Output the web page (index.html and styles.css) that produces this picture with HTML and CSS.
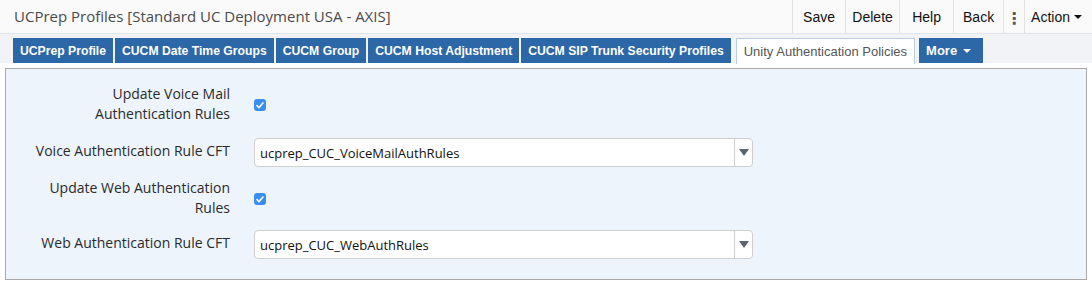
FILE: index.html
```html
<!DOCTYPE html>
<html>
<head>
<meta charset="utf-8">
<link rel="stylesheet" href="styles.css">
</head>
<body>
<header class="topbar">
  <div class="title">UCPrep Profiles [Standard UC Deployment USA - AXIS]</div>
  <div class="actions">
    <button class="act w53">Save</button>
    <button class="act w54">Delete</button>
    <button class="act w54">Help</button>
    <button class="act w50">Back</button>
    <span class="dots">&#8942;</span>
    <button class="act action">Action <span class="caret"></span></button>
  </div>
</header>
<nav class="tabs">
  <a class="tab">UCPrep Profile</a>
  <a class="tab">CUCM Date Time Groups</a>
  <a class="tab">CUCM Group</a>
  <a class="tab">CUCM Host Adjustment</a>
  <a class="tab">CUCM SIP Trunk Security Profiles</a>
  <a class="tab active">Unity Authentication Policies</a>
  <a class="tab more">More <span class="caret white"></span></a>
</nav>
<section class="panel">
  <div class="row">
    <label class="lbl">Update Voice Mail<br>Authentication Rules</label>
    <div class="ctl"><span class="check"><svg width="8" height="7" viewBox="0 0 8 7"><path d="M1 3.6 L3 5.6 L7 1" fill="none" stroke="#fff" stroke-width="1.6" stroke-linecap="round" stroke-linejoin="round"/></svg></span></div>
  </div>
  <div class="row">
    <label class="lbl single">Voice Authentication Rule CFT</label>
    <div class="ctl"><div class="select"><span class="val">ucprep_CUC_VoiceMailAuthRules</span><span class="arrow"><span class="tri"></span></span></div></div>
  </div>
  <div class="row">
    <label class="lbl">Update Web Authentication<br>Rules</label>
    <div class="ctl"><span class="check"><svg width="8" height="7" viewBox="0 0 8 7"><path d="M1 3.6 L3 5.6 L7 1" fill="none" stroke="#fff" stroke-width="1.6" stroke-linecap="round" stroke-linejoin="round"/></svg></span></div>
  </div>
  <div class="row">
    <label class="lbl single">Web Authentication Rule CFT</label>
    <div class="ctl"><div class="select"><span class="val">ucprep_CUC_WebAuthRules</span><span class="arrow"><span class="tri"></span></span></div></div>
  </div>
</section>
</body>
</html>
```
FILE: styles.css
```css
html, body {
  margin: 0;
  padding: 0;
  background: #ffffff;
}
body {
  width: 1092px;
  height: 287px;
  overflow: hidden;
}
.topbar {
  display: flex;
  justify-content: space-between;
  align-items: stretch;
  height: 34px;
  background: #fafafa;
  border-bottom: 1px solid #dfe4ea;
  box-sizing: border-box;
}
.title {
  font-family: "Open Sans", sans-serif;
  font-size: 15px;
  color: #4a4a4a;
  padding-left: 14px;
  display: flex;
  align-items: center;
  padding-bottom: 1px;
}
.actions {
  display: flex;
  align-items: stretch;
}
.act {
  font-family: "Liberation Sans", Arial, sans-serif;
  font-size: 14px;
  color: #111;
  background: transparent;
  border: none;
  border-left: 1px solid #e2e2e2;
  padding: 0;
  margin: 0;
  text-align: center;
  box-sizing: border-box;
  cursor: pointer;
}
.w53 { width: 53px; }
.w54 { width: 54px; }
.w50 { width: 50px; }
.dots {
  display: flex;
  align-items: center;
  justify-content: center;
  width: 21px;
  box-sizing: border-box;
  border-left: 1px solid #e2e2e2;
  font-family: "DejaVu Sans", sans-serif;
  font-size: 16px;
  font-weight: bold;
  color: #555;
  padding-top: 3px;
}
.action {
  padding: 0 10px 0 6px;
  display: flex;
  align-items: center;
  gap: 4px;
}
.caret {
  display: inline-block;
  width: 0;
  height: 0;
  border-left: 4px solid transparent;
  border-right: 4px solid transparent;
  border-top: 4px solid #111;
  margin-top: 1px;
}
.caret.white { border-top-color: #fff; margin-left: 6px; }
.tabs {
  display: flex;
  align-items: flex-end;
  gap: 2px;
  height: 29px;
  background: #f1f3f6;
  padding-left: 13px;
  box-sizing: border-box;
}
.tab {
  font-family: "Liberation Sans", Arial, sans-serif;
  font-size: 12.2px;
  font-weight: bold;
  color: #fff;
  background: #2c67a8;
  height: 25px;
  padding: 0 7px;
  display: flex;
  align-items: center;
  box-sizing: border-box;
  white-space: nowrap;
}
.tab.active {
  background: #fff;
  color: #555;
  font-size: 13px;
  font-weight: normal;
  border: 1px solid #b9cde3;
  border-bottom: none;
  height: 26px;
  margin: 0 2px -1px 3px;
  padding: 0 7px;
}
.tab.more { padding: 0 12px 0 7px; font-size: 13px; }
.panel {
  margin: 5px 5px 0 5px;
  height: 212px;
  box-sizing: border-box;
  background: #edf4fc;
  border: 1px solid #a9a9a9;
  padding-top: 15px;
  font-family: "Open Sans", sans-serif;
  font-size: 14px;
  color: #2b2b2b;
}
.row {
  display: grid;
  grid-template-columns: 224px 1fr;
  column-gap: 24px;
  align-items: center;
}
.row:nth-child(1) { margin-bottom: 14px; }
.row:nth-child(2) { margin-bottom: 11px; }
.row:nth-child(3) { margin-bottom: 12px; }
.lbl {
  text-align: right;
  line-height: 20px;
}
.lbl.single { align-self: start; padding-top: 3px; }
.ctl {
  display: flex;
  align-items: center;
}
.check {
  width: 12px;
  height: 12px;
  border-radius: 3px;
  background: #3a8ef0;
  display: flex;
  align-items: center;
  justify-content: center;
  margin-top: 2px;
}
.select {
  width: 499px;
  height: 29px;
  box-sizing: border-box;
  background: #fff;
  border: 1px solid #cfcfcf;
  border-radius: 4px;
  display: flex;
  align-items: center;
  font-size: 13px;
  color: #111;
}
.val {
  flex: 1;
  padding-left: 5px;
}
.arrow {
  width: 17px;
  align-self: stretch;
  border-left: 1px solid #cfcfcf;
  display: flex;
  align-items: center;
  justify-content: center;
}
.tri {
  width: 0;
  height: 0;
  border-left: 5px solid transparent;
  border-right: 5px solid transparent;
  border-top: 7px solid #5c6470;
}
```
